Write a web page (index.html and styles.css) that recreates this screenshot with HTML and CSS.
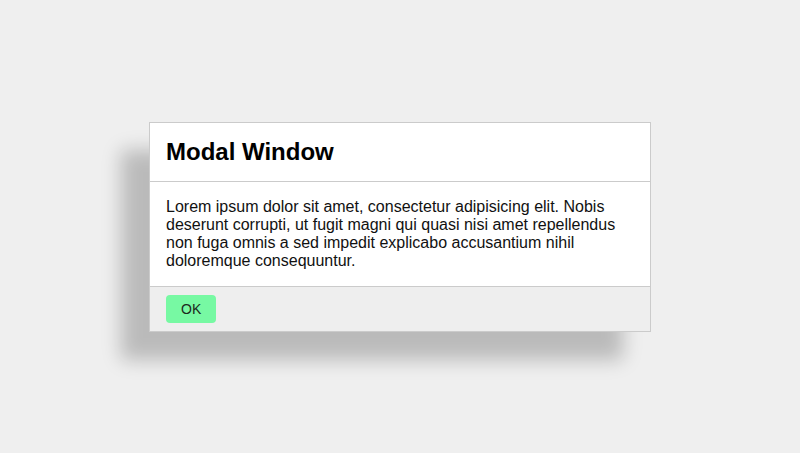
FILE: index.html
```html
<!DOCTYPE html>
<html>
<head>
    <meta charset="utf-8">
    <title>Modal Window</title>
    <link rel="stylesheet" href="styles.css">
</head>
<body>
    <div class="overlay">
        <div class="modal">
            <div class="modal-header">
                <h2 class="modal-title">Modal Window</h2>
            </div>
            <div class="modal-body">
                Lorem ipsum dolor sit amet, consectetur adipisicing elit. Nobis deserunt corrupti, ut fugit magni qui quasi nisi amet repellendus non fuga omnis a sed impedit explicabo accusantium nihil doloremque consequuntur.
            </div>
            <div class="modal-footer">
                <button class="btn">OK</button>
            </div>
        </div>
    </div>
</body>
</html>
```

FILE: styles.css
```css
html, body{
    margin: 0;
    padding: 0;
    height: 100%;
}
body{
    background-color: #efefef;
    font-family: "Liberation Sans", Arial, sans-serif;
    color: #111;
}
.overlay{
    height: 100%;
    display: flex;
    justify-content: center;
    align-items: center;
}
.modal{
    width: 500px;
    background-color: #fff;
    border: solid 1px #cbcbcb;
    box-shadow: -28px 28px 18px rgba(0, 0, 0, 0.22);
}
.modal-header{
    padding: 15px 16px;
    border-bottom: solid 1px #cbcbcb;
}
.modal-title{
    margin: 0;
    font-size: 24px;
    line-height: 28px;
    font-weight: bold;
    color: #000;
}
.modal-body{
    padding: 16px;
    font-size: 16px;
    line-height: 18px;
    border-bottom: solid 1px #cbcbcb;
}
.modal-footer{
    padding: 8px 16px;
    background-color: #eee;
}
.btn{
    display: block;
    margin: 0;
    padding: 5px 15px;
    border: none;
    border-radius: 4px;
    background-color: #77f9a3;
    font-family: "Liberation Sans", Arial, sans-serif;
    font-size: 14px;
    line-height: 18px;
    color: #1c2a20;
}
```
